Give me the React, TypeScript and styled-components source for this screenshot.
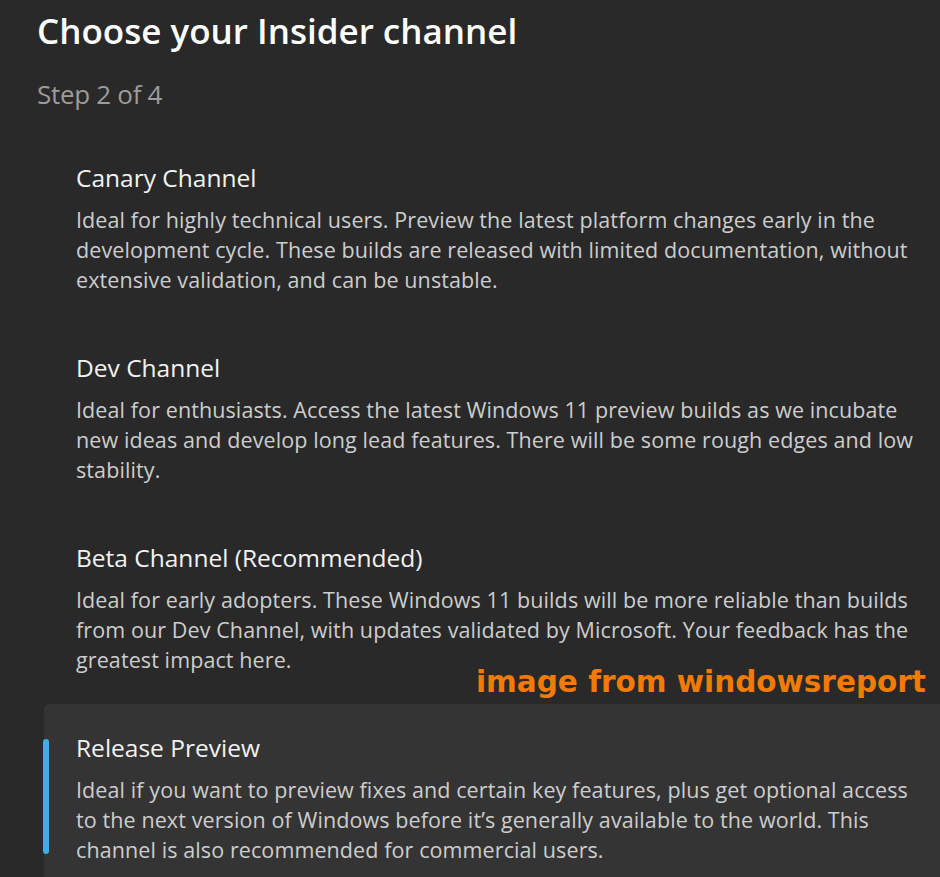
import React from "react";
import styled, { createGlobalStyle } from "styled-components";

const Global = createGlobalStyle`
  html, body { margin: 0; padding: 0; background: #292929; }
  body { font-family: "Open Sans", "Noto Sans", sans-serif; -webkit-font-smoothing: antialiased; }
`;

const Page = styled.div`
  position: relative;
  width: 940px;
  height: 877px;
  overflow: hidden;
  background: #292929;
  padding-top: 7px;
  box-sizing: border-box;
`;

const Header = styled.header`
  padding-left: 37px;
  display: flex;
  flex-direction: column;
  gap: 21px;
  margin-bottom: 22px;
`;

const Title = styled.h1`
  margin: 0;
  font-size: 35px;
  line-height: 48px;
  font-weight: 600;
  color: #ffffff;
`;

const Step = styled.div`
  font-size: 26px;
  line-height: 36px;
  color: #9c9c9c;
  letter-spacing: -0.3px;
`;

const List = styled.div`
  display: flex;
  flex-direction: column;
`;

const Card = styled.div<{ $selected?: boolean }>`
  position: relative;
  margin-left: 44px;
  padding: 27px 20px 29px 32px;
  border-radius: 6px 0 0 6px;
  background: ${(p) => (p.$selected ? "#343434" : "transparent")};
  display: flex;
  flex-direction: column;
  gap: 10px;
`;

const Indicator = styled.span`
  position: absolute;
  left: -1px;
  top: 35px;
  width: 6px;
  height: 115px;
  border-radius: 3px;
  background: #3bb0e8;
`;

const ChannelName = styled.div`
  font-size: 24.5px;
  line-height: 34px;
  color: #f2f2f2;
`;

const Desc = styled.div`
  font-size: 21.5px;
  line-height: 30px;
  color: #cdcdcd;
  letter-spacing: 0.1px;
`;

const Line = styled.span`
  display: block;
  white-space: nowrap;
`;

const Watermark = styled.div`
  position: absolute;
  left: 476px;
  top: 662px;
  font-family: "DejaVu Sans", "Lato", sans-serif;
  font-weight: 700;
  font-size: 29.5px;
  line-height: 40px;
  color: #f27b06;
  white-space: nowrap;
`;

const channels = [
  {
    name: "Canary Channel",
    lines: [
      "Ideal for highly technical users. Preview the latest platform changes early in the",
      "development cycle. These builds are released with limited documentation, without",
      "extensive validation, and can be unstable.",
    ],
  },
  {
    name: "Dev Channel",
    lines: [
      "Ideal for enthusiasts. Access the latest Windows 11 preview builds as we incubate",
      "new ideas and develop long lead features. There will be some rough edges and low",
      "stability.",
    ],
  },
  {
    name: "Beta Channel (Recommended)",
    lines: [
      "Ideal for early adopters. These Windows 11 builds will be more reliable than builds",
      "from our Dev Channel, with updates validated by Microsoft. Your feedback has the",
      "greatest impact here.",
    ],
  },
  {
    name: "Release Preview",
    selected: true,
    lines: [
      "Ideal if you want to preview fixes and certain key features, plus get optional access",
      "to the next version of Windows before it\u2019s generally available to the world. This",
      "channel is also recommended for commercial users.",
    ],
  },
];

export default function App() {
  return (
    <>
      <Global />
      <Page>
        <Header>
          <Title>Choose your Insider channel</Title>
          <Step>Step 2 of 4</Step>
        </Header>
        <List>
          {channels.map((c) => (
            <Card key={c.name} $selected={c.selected}>
              {c.selected && <Indicator />}
              <ChannelName>{c.name}</ChannelName>
              <Desc>
                {c.lines.map((l) => (
                  <Line key={l}>{l}</Line>
                ))}
              </Desc>
            </Card>
          ))}
        </List>
        <Watermark>image from windowsreport</Watermark>
      </Page>
    </>
  );
}
